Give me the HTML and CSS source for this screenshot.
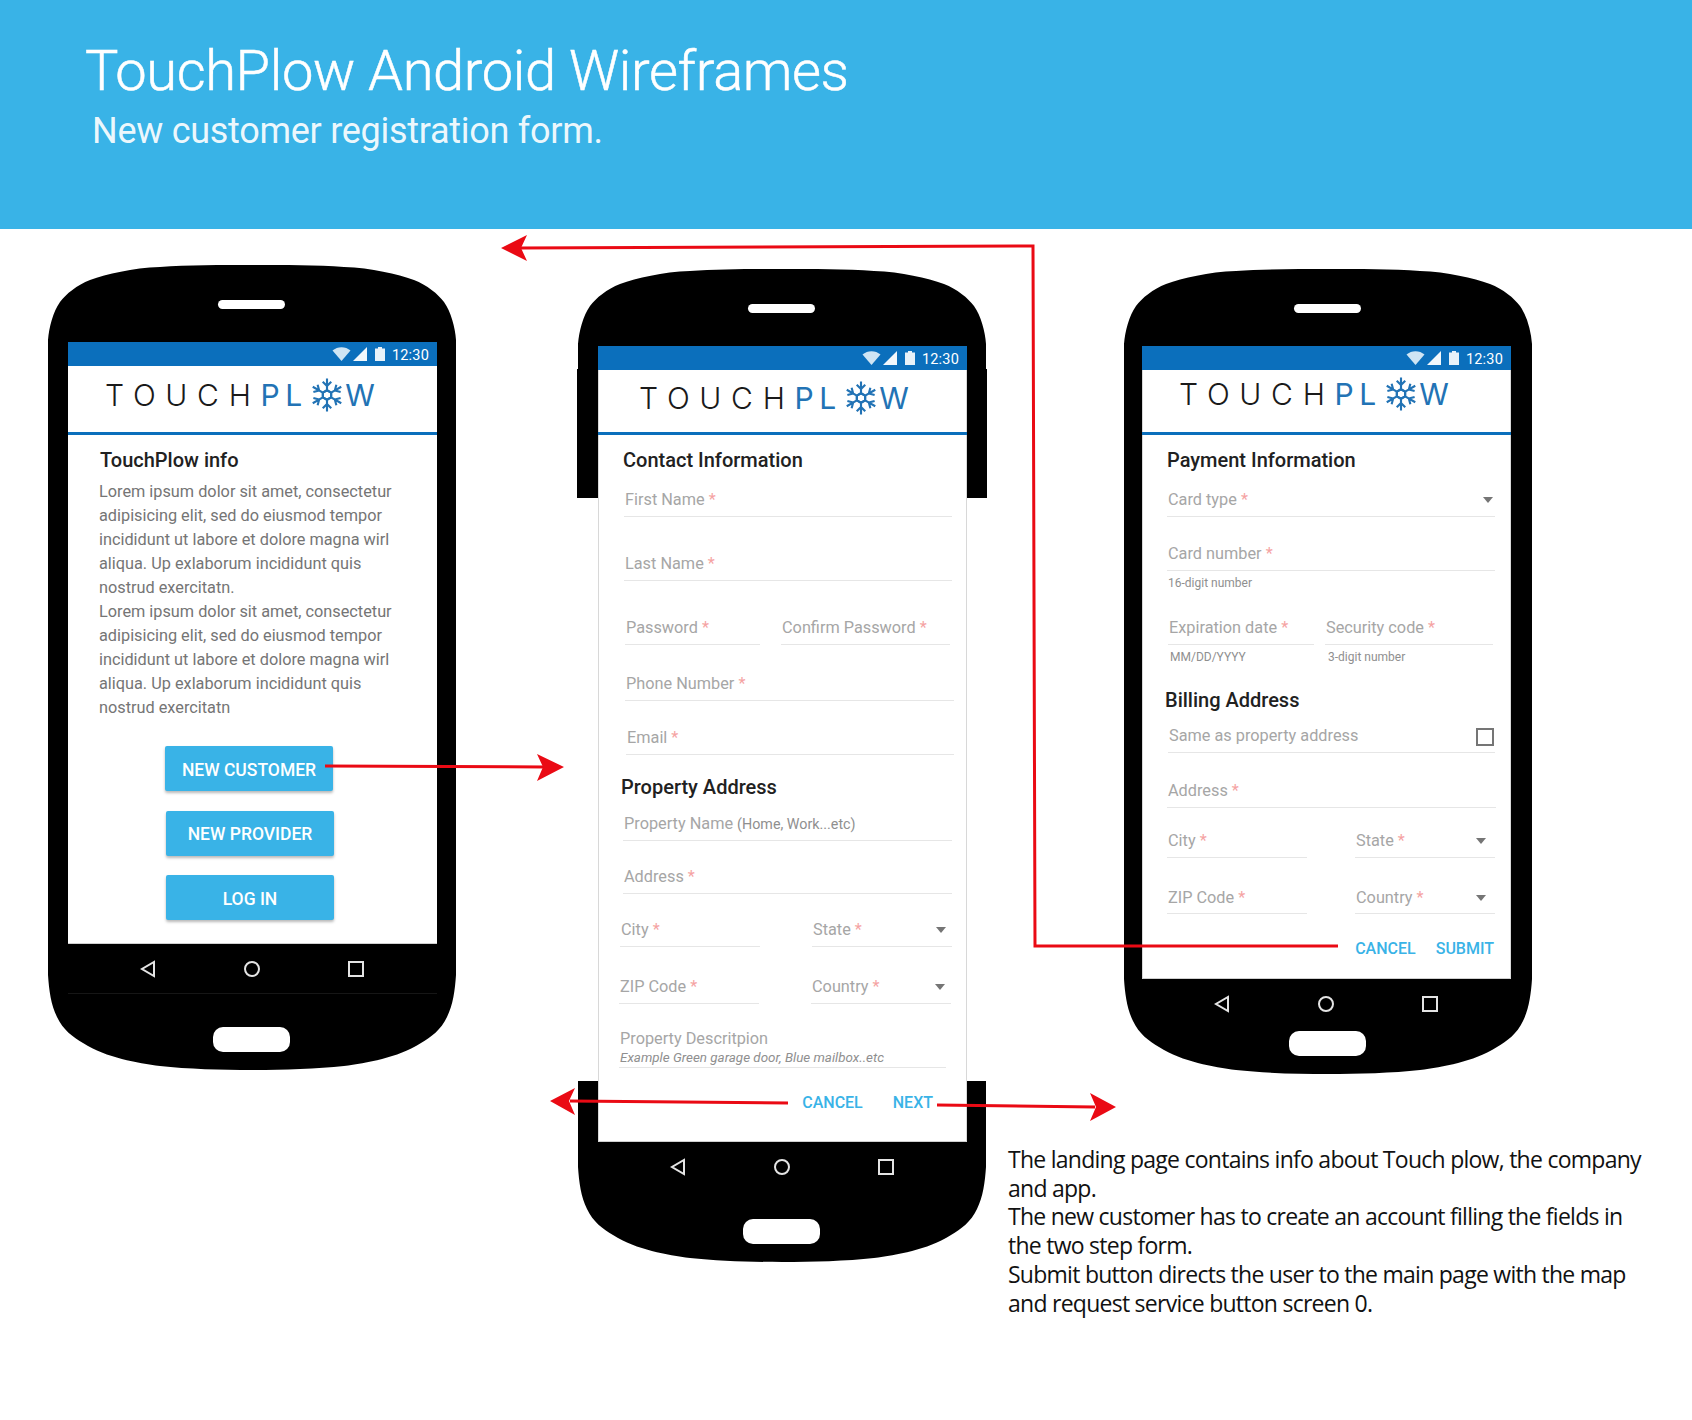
FILE: index.html
```html
<!DOCTYPE html>
<html lang="en">
<head>
<meta charset="utf-8">
<title>TouchPlow Android Wireframes</title>
<link rel="stylesheet" href="styles.css">
</head>
<body>
<svg class="defs" width="0" height="0" aria-hidden="true">
  <defs>
    <g id="arm"><path d="M0-4.500V-15.500M0-8.500-4-12.500M0-8.500 4-12.500M-3.900-2.250 0-4.500 3.900-2.250" fill="none" stroke="#2273b5" stroke-width="2"/></g>
    <symbol id="flake" viewBox="-16 -16 32 32">
      <use href="#arm"/><use href="#arm" transform="rotate(60)"/><use href="#arm" transform="rotate(120)"/><use href="#arm" transform="rotate(180)"/><use href="#arm" transform="rotate(240)"/><use href="#arm" transform="rotate(300)"/>
    </symbol>
    <symbol id="cap-top" viewBox="0 0 410 100">
      <path d="M1 100V75C2 62 6 47 13 37C19 29 30 20 43 15C60 9 85 3 113 2C140 0 175 0 205 0C235 0 270 0 297 2C325 3 350 9 367 15C380 20 391 29 397 37C404 47 408 62 409 75V100Z"/>
      <rect x="171" y="35" width="67" height="9" rx="4.5" fill="#fff"/>
    </symbol>
    <symbol id="cap-bottom" viewBox="0 0 410 110">
      <path d="M1 0V15C2 30 4 45 10 57C16 70 26 77 36 83C60 98 90 103 113 106C140 109 175 110 205 110C235 110 270 109 297 106C320 103 350 98 374 83C384 77 394 70 400 57C406 45 408 30 409 15V0Z"/>
      <rect x="166" y="67" width="77" height="25" rx="10" fill="#fff"/>
    </symbol>
    <symbol id="i-wifi" viewBox="0 0 18 14"><path d="M0 3.5C5-1 13-1 18 3.5L9 14Z" fill="#cfe5f4"/></symbol>
    <symbol id="i-signal" viewBox="0 0 14 14"><path d="M14 0V14H0Z" fill="#f2f8fc"/></symbol>
    <symbol id="i-battery" viewBox="0 0 10 14"><path d="M3 0H7V1.500H10V14H0V1.500H3Z" fill="#e8f2f9"/></symbol>
    <symbol id="i-back" viewBox="0 0 18 18"><path d="M15 2V16L3 9Z" fill="none" stroke="#e4e4e4" stroke-width="2"/></symbol>
    <symbol id="i-home" viewBox="0 0 18 18"><circle cx="9" cy="9" r="7" fill="none" stroke="#e4e4e4" stroke-width="2"/></symbol>
    <symbol id="i-recent" viewBox="0 0 18 18"><rect x="2" y="2" width="14" height="14" fill="none" stroke="#e4e4e4" stroke-width="2"/></symbol>
  </defs>
</svg>

<header class="banner">
  <h1 class="banner-title">TouchPlow Android Wireframes</h1>
  <p class="banner-sub">New customer registration form.</p>
</header>

<main class="board">

  <section class="phone phone-info">
    <svg class="cap cap-t"><use href="#cap-top"/></svg>
    <div class="phone-body"></div>
    <svg class="cap cap-b"><use href="#cap-bottom"/></svg>
    <div class="device">
      <div class="screen">
        <div class="status">
          <svg class="ic-wifi"><use href="#i-wifi"/></svg>
          <svg class="ic-signal"><use href="#i-signal"/></svg>
          <svg class="ic-battery"><use href="#i-battery"/></svg>
          <span class="clock">12:30</span>
        </div>
        <div class="appbar appbar-tall">
          <div class="logo logo-info"><span class="logo-dark">TOUCH</span><span class="logo-blue">PL</span><svg class="flake"><use href="#flake"/></svg><span class="logo-blue">W</span></div>
        </div>
        <h2 class="section-title info-title">TouchPlow info</h2>
        <p class="lorem">Lorem ipsum dolor sit amet, consectetur<br>adipisicing elit, sed do eiusmod tempor<br>incididunt ut labore et dolore magna wirl<br>aliqua. Up exlaborum incididunt quis<br>nostrud exercitatn.<br>Lorem ipsum dolor sit amet, consectetur<br>adipisicing elit, sed do eiusmod tempor<br>incididunt ut labore et dolore magna wirl<br>aliqua. Up exlaborum incididunt quis<br>nostrud exercitatn</p>
        <div class="buttons">
          <button class="btn">NEW CUSTOMER</button>
          <button class="btn">NEW PROVIDER</button>
          <button class="btn">LOG IN</button>
        </div>
      </div>
      <nav class="navbar">
        <svg class="nav-ic"><use href="#i-back"/></svg>
        <svg class="nav-ic"><use href="#i-home"/></svg>
        <svg class="nav-ic"><use href="#i-recent"/></svg>
      </nav>
    </div>
  </section>

  <section class="phone phone-contact">
    <svg class="cap cap-t"><use href="#cap-top"/></svg>
    <div class="phone-body contact-upper"></div>
    <div class="phone-gap"></div>
    <div class="phone-body contact-lower"></div>
    <svg class="cap cap-b"><use href="#cap-bottom"/></svg>
    <div class="device">
      <div class="screen screen-edged">
        <div class="status">
          <svg class="ic-wifi"><use href="#i-wifi"/></svg>
          <svg class="ic-signal"><use href="#i-signal"/></svg>
          <svg class="ic-battery"><use href="#i-battery"/></svg>
          <span class="clock">12:30</span>
        </div>
        <div class="appbar">
          <div class="logo logo-contact"><span class="logo-dark">TOUCH</span><span class="logo-blue">PL</span><svg class="flake"><use href="#flake"/></svg><span class="logo-blue">W</span></div>
        </div>
        <h2 class="section-title contact-title">Contact Information</h2>
        <div class="field c-first"><span class="lbl">First Name <i>*</i></span></div>
        <div class="field c-last"><span class="lbl">Last Name <i>*</i></span></div>
        <div class="pair c-pass">
          <div class="field w135"><span class="lbl">Password <i>*</i></span></div>
          <div class="field w169"><span class="lbl">Confirm Password <i>*</i></span></div>
        </div>
        <div class="field c-phone"><span class="lbl">Phone Number <i>*</i></span></div>
        <div class="field c-email"><span class="lbl">Email <i>*</i></span></div>
        <h2 class="section-title property-title">Property Address</h2>
        <div class="field c-prop"><span class="lbl">Property Name <small>(Home, Work...etc)</small></span></div>
        <div class="field c-addr"><span class="lbl">Address <i>*</i></span></div>
        <div class="pair c-city">
          <div class="field w140"><span class="lbl">City <i>*</i></span></div>
          <div class="field w140 select"><span class="lbl">State <i>*</i></span><b class="caret"></b></div>
        </div>
        <div class="pair c-zip">
          <div class="field w140"><span class="lbl">ZIP Code <i>*</i></span></div>
          <div class="field w140 select"><span class="lbl">Country <i>*</i></span><b class="caret"></b></div>
        </div>
        <div class="field c-desc"><span class="lbl">Property Descritpion</span><em class="example">Example Green garage door, Blue mailbox..etc</em></div>
        <div class="actions actions-contact"><span>CANCEL</span><span>NEXT</span></div>
      </div>
      <nav class="navbar">
        <svg class="nav-ic"><use href="#i-back"/></svg>
        <svg class="nav-ic"><use href="#i-home"/></svg>
        <svg class="nav-ic"><use href="#i-recent"/></svg>
      </nav>
    </div>
  </section>

  <section class="phone phone-payment">
    <svg class="cap cap-t"><use href="#cap-top"/></svg>
    <div class="phone-body"></div>
    <svg class="cap cap-b"><use href="#cap-bottom"/></svg>
    <div class="device">
      <div class="screen screen-edged">
        <div class="status">
          <svg class="ic-wifi"><use href="#i-wifi"/></svg>
          <svg class="ic-signal"><use href="#i-signal"/></svg>
          <svg class="ic-battery"><use href="#i-battery"/></svg>
          <span class="clock">12:30</span>
        </div>
        <div class="appbar">
          <div class="logo logo-payment"><span class="logo-dark">TOUCH</span><span class="logo-blue">PL</span><svg class="flake"><use href="#flake"/></svg><span class="logo-blue">W</span></div>
        </div>
        <h2 class="section-title payment-title">Payment Information</h2>
        <div class="field p-card select"><span class="lbl">Card type <i>*</i></span><b class="caret"></b></div>
        <div class="field p-number"><span class="lbl">Card number <i>*</i></span></div>
        <div class="hint p-hint">16-digit number</div>
        <div class="pair p-exp">
          <div class="field w146"><span class="lbl">Expiration date <i>*</i></span></div>
          <div class="field w168"><span class="lbl">Security code <i>*</i></span></div>
        </div>
        <div class="pair p-hints">
          <div class="hint w157">MM/DD/YYYY</div>
          <div class="hint">3-digit number</div>
        </div>
        <h2 class="section-title billing-title">Billing Address</h2>
        <div class="field p-same select"><span class="lbl">Same as property address</span><b class="checkbox"></b></div>
        <div class="field p-addr"><span class="lbl">Address <i>*</i></span></div>
        <div class="pair p-city">
          <div class="field w140"><span class="lbl">City <i>*</i></span></div>
          <div class="field w140 select"><span class="lbl">State <i>*</i></span><b class="caret"></b></div>
        </div>
        <div class="pair p-zip">
          <div class="field w140"><span class="lbl">ZIP Code <i>*</i></span></div>
          <div class="field w140 select"><span class="lbl">Country <i>*</i></span><b class="caret"></b></div>
        </div>
        <div class="actions actions-payment"><span>CANCEL</span><span>SUBMIT</span></div>
      </div>
      <nav class="navbar">
        <svg class="nav-ic"><use href="#i-back"/></svg>
        <svg class="nav-ic"><use href="#i-home"/></svg>
        <svg class="nav-ic"><use href="#i-recent"/></svg>
      </nav>
    </div>
  </section>

  <svg class="flows" viewBox="0 0 1692 1191" aria-hidden="true">
    <g fill="none" stroke="#ea0a14" stroke-width="3">
      <path d="M325 537 545 538"/>
      <path d="M1338 717H1035L1033 17 520 19"/>
      <path d="M788 874 570 872"/>
      <path d="M937 876 1095 878"/>
    </g>
    <g fill="#ea0a14">
      <path d="M564 538 537 525 543 538 537 552Z"/>
      <path d="M501 19 527 6 521 19 527 32Z"/>
      <path d="M550 872 575 859 569 872 575 886Z"/>
      <path d="M1116 878 1090 864 1096 878 1090 892Z"/>
    </g>
  </svg>

  <div class="notes">
    <p>The landing page contains info about Touch plow, the company<br>and app.</p>
    <p>The new customer has to create an account filling the fields in<br>the two step form.</p>
    <p>Submit button directs the user to the main page with the map<br>and request service button screen 0.</p>
  </div>
</main>
</body>
</html>
```
FILE: styles.css
```css
* { box-sizing: border-box; }
html, body { margin: 0; padding: 0; background: #fff; }
body { width: 1692px; height: 1420px; overflow: hidden; font-family: Roboto, "Liberation Sans", sans-serif; }
.defs { position: absolute; }

.banner { height: 229px; background: #39b3e7; color: #fff; padding: 36px 0 0 85px; }
.banner-title { margin: 0; font: 300 56px/70px Roboto, sans-serif; letter-spacing: -.38px; -webkit-text-stroke: .5px #fff; }
.banner-sub { margin: 3px 0 0 7px; font: 400 36px/44px Roboto, sans-serif; letter-spacing: -.28px; color: rgba(255,255,255,.93); }

.board { position: relative; height: 1191px; }
.flows { position: absolute; left: 0; top: 0; width: 1692px; height: 1191px; pointer-events: none; }

.phone { position: absolute; width: 410px; display: flex; flex-direction: column; }
.phone-info { left: 47px; top: 36px; height: 805px; }
.phone-contact { left: 577px; top: 40px; height: 993px; }
.phone-payment { left: 1123px; top: 40px; height: 805px; }

.cap { display: block; width: 410px; flex: none; }
.cap-t { height: 100px; }
.cap-b { height: 110px; }
.phone-body { flex: 1; background: #000; margin: 0 1px; }
.contact-upper { flex: none; height: 129px; margin: 0; }
.phone-gap { flex: none; height: 583px; }
.contact-lower { flex: none; height: 71px; }

.device { position: absolute; left: 21px; top: 77px; width: 369px; display: flex; flex-direction: column; }
.phone-payment .device { left: 19px; }

.screen { background: #fff; display: flex; flex-direction: column; align-items: flex-start; }
.phone-info .screen { height: 602px; }
.phone-contact .screen { height: 796px; }
.phone-payment .screen { height: 633px; }
.screen-edged { box-shadow: inset 1px 0 0 #d8d8d8, inset -1px 0 0 #d8d8d8, inset 0 -1px 0 #cfcfcf; }
.phone-info .screen { box-shadow: inset 0 -1px 0 #cfcfcf; }

.status { width: 100%; height: 24px; background: #0b6fbc; display: flex; align-items: center; justify-content: flex-end; padding-right: 8px; flex: none; }
.ic-wifi { width: 19px; height: 14px; margin-right: 2px; }
.ic-signal { width: 14px; height: 14px; margin-right: 8px; }
.ic-battery { width: 10px; height: 14px; margin-right: 7px; }
.clock { color: #fff; font-size: 14.5px; line-height: 20px; padding-top: 4px; letter-spacing: .2px; }

.appbar { width: 100%; height: 65px; border-bottom: 3px solid #0b6fbc; display: flex; align-items: flex-start; flex: none; }
.appbar-tall { height: 69px; }
.logo { display: flex; align-items: center; height: 30px; font: 300 30px/30px Inter, sans-serif; white-space: nowrap; }
.logo-info { margin: 14px 0 0 37px; }
.logo-contact { margin: 13px 0 0 41px; }
.logo-payment { margin: 9px 0 0 37px; }
.logo-dark { color: #1a1a1a; letter-spacing: 9.7px; }
.logo-blue { color: #2273b5; font-weight: 400; letter-spacing: 5.5px; }
.flake { width: 34px; height: 34px; margin: 0 1px 0 2.5px; flex: none; }

.section-title { margin: 0; font: 500 20px/24px Roboto, sans-serif; color: #212121; }
.info-title { margin: 13px 0 0 32px; }
.contact-title { margin: 13px 0 0 25px; }
.property-title { margin: 20px 0 0 23px; }
.payment-title { margin: 13px 0 0 25px; }
.billing-title { margin: 23px 0 0 23px; }

.lorem { margin: 8px 0 0 31px; font-size: 16.3px; line-height: 24px; color: #757575; white-space: nowrap; }
.buttons { margin: 26px 0 0 97px; display: flex; flex-direction: column; gap: 19.5px; }
.btn { width: 168px; height: 45px; border: 0; border-radius: 2px; background: #39b3e7; color: #fff; font: 500 17.500px/20px Roboto, sans-serif; padding: 2px 0 0; box-shadow: 0 2px 3px rgba(0,0,0,.28); }
.btn + .btn { margin-left: 1px; }

.field { border-bottom: 1px solid #e6e6e6; padding: 1px 0 6px 1px; height: 28px; font-size: 16.3px; line-height: 20px; color: #a6a6a6; white-space: nowrap; }
.lbl i { font-style: normal; color: #f5a3a3; }
.lbl small { font-size: 14.3px; color: #8f8f8f; }
.select { display: flex; justify-content: space-between; align-items: center; padding-right: 6px; }
.caret { width: 0; height: 0; border: 5.500px solid transparent; border-top: 6px solid #757575; border-bottom: 0; }
.checkbox { width: 18px; height: 18px; border: 2px solid #757575; margin: 2px -5px 0 0; }
.pair { display: flex; }
.w135 { width: 135px; margin-right: 21px; }
.w169 { width: 169px; }
.w140 { width: 140px; }
.pair .w140:first-child { margin-right: 52px; }
.p-city .w140:first-child, .p-zip .w140:first-child { margin-right: 48px; }
.p-city .select, .p-zip .select { padding-right: 9px; }
.p-zip .field { padding-top: 2px; padding-bottom: 5px; }
.w146 { width: 146px; margin-right: 11px; }
.w168 { width: 168px; }
.w157 { width: 158px; }

.c-first { margin: 17px 0 0 26px; width: 328px; }
.c-last { margin: 36px 0 0 26px; width: 328px; }
.c-pass { margin: 36px 0 0 27px; }
.c-phone { margin: 28px 0 0 27px; width: 329px; }
.c-email { margin: 26px 0 0 28px; width: 328px; }
.c-prop { margin: 14px 0 0 25px; width: 329px; }
.c-addr { margin: 25px 0 0 25px; width: 329px; }
.c-city { margin: 25px 0 0 22px; }
.c-zip { margin: 29px 0 0 21px; }
.c-desc { margin: 24px 0 0 21px; width: 327px; height: 40px; padding-bottom: 0; }
.example { display: block; font-size: 13.400px; line-height: 18px; color: #8f8f8f; }

.p-card { margin: 17px 0 0 25px; width: 328px; padding-right: 2px; }
.p-number { margin: 26px 0 0 25px; width: 328px; }
.hint { font-size: 12px; line-height: 16px; color: #8f8f8f; white-space: nowrap; }
.p-hint { margin: 4px 0 0 26px; }
.p-exp { margin: 26px 0 0 26px; }
.p-hints { margin: 4px 0 0 28px; }
.p-same { margin: 13px 0 0 26px; width: 327px; align-items: flex-start; }
.p-addr { margin: 27px 0 0 25px; width: 329px; }
.p-city { margin: 22px 0 0 25px; }
.p-zip { margin: 28px 0 0 25px; }

.actions { display: flex; justify-content: flex-end; width: 100%; font: 500 16px/20px Roboto, sans-serif; color: #39b3e7; margin-top: 25px; }
.actions-contact { gap: 30px; padding-right: 34px; }
.actions-payment { gap: 20px; padding-right: 17px; }

.navbar { height: 50px; display: flex; align-items: center; justify-content: center; gap: 86px; padding-right: 2px; }
.phone-info .navbar { border-bottom: 1px solid #161616; }
.nav-ic { width: 18px; height: 18px; }

.notes { position: absolute; left: 1008px; top: 916px; width: 680px; font: 400 23px/28.7px "Open Sans", sans-serif; letter-spacing: -.74px; color: #111; }
.notes p { margin: 0; white-space: nowrap; }
```
